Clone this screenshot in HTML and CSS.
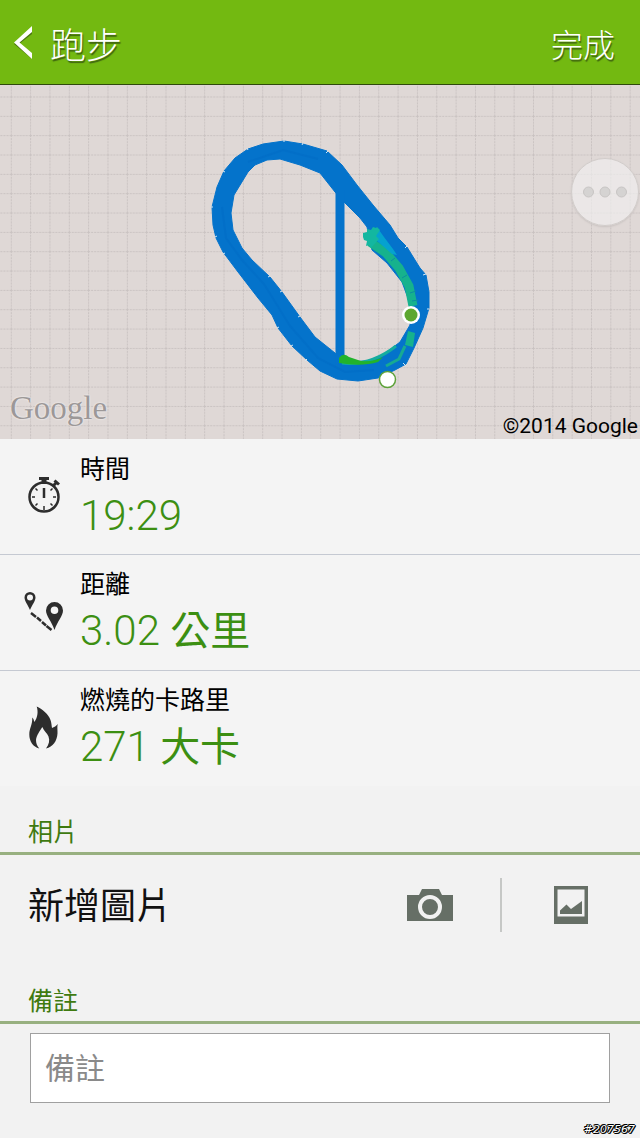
FILE: index.html
```html
<!DOCTYPE html>
<html lang="zh-Hant">

<head>
  <meta charset="UTF-8">
  <meta name="viewport" content="width=device-width, initial-scale=1.0">
  <title>跑步</title>
  <link rel="stylesheet" href="styles.css">
</head>

<body>
  <header class="topbar">
    <button class="back" type="button" aria-label="返回">
      <svg width="22" height="34" viewBox="0 0 22 34">
        <path d="M20 3v5L7 18l13 10v5L2 18z" fill="#3b5a10" opacity=".7"/>
        <path d="M20 0v6L7.500 16.500 20 27v6L2 16.500z" fill="#fff"/>
      </svg>
    </button>
    <h1>跑步</h1>
    <button class="done" type="button">完成</button>
  </header>

  <!-- Route map -->
  <section class="map">
    <svg class="map-canvas" viewBox="0 85 640 354" preserveAspectRatio="xMidYMid slice">
      <defs>
        <pattern id="grid" x="10.800" y="96.500" width="19.340" height="19.340" patternUnits="userSpaceOnUse">
          <path d="M.5 0V19.340M0 .5H19.340" stroke="#c9c2c1" stroke-width="1" stroke-dasharray="2 1" fill="none"/>
        </pattern>
      </defs>
      <rect y="85" width="640" height="354" fill="#dfd8d6"/>
      <rect y="85" width="640" height="354" fill="url(#grid)"/>

      <!-- running track -->
      <path fill="#0473cb" stroke="#0473cb" stroke-width="1" stroke-linejoin="round" fill-rule="evenodd" d="M212 207L217 187 224 171 235 158 248 149 263 144 284 141 303 144 327 151 342 165 357 185 373 205 390 225 398 238 407 247 415 260 420 268 426 275 429 292 429 308 423 328 414 348 406 364 395 370 378 378 358 381 337 379 320 371 307 360 292 346 278 328 272 315 258 298 238 272 223 252 216 238 213 225z
        M231 213L233 230 242 248 252 260 270 277 282 292 300 317 315 337 325 345 335 353 342 362 367 361 383 355 400 342 410 325 410 308 408 298 402 282 387 263 372 250 367 227 360 218 345 203 335 192 320 173 300 165 280 159 267 160 255 165 248 172 234 195z"/>
      <path d="M340 190V366" stroke="#0473cb" stroke-width="9"/>
      <path d="M222 207L226 238 242 260 264 284 290 326 318 358 345 372 374 370M248 162L283 150 318 159" stroke="#0068c4" stroke-width="2" fill="none" opacity=".4"/>
      <path d="M370 242L386 253 399 268 409 286 413 306" stroke="#16b28d" stroke-width="9" fill="none"/>
      <path d="M374 231l5-1 5 7 9 12 4 6-5-1-17-15z" fill="#05a2cf"/>
      <path d="M363 233l4-1 0-3 4 1 2-3 3 1 1-1 3 3-4 6 3 3-8 9-2-3-3 1 1-5-3-1-1-3z" fill="#13b7a0"/>
      <path d="M391 261l4-3M402 278l5-3M410 293l6-2M412 301l6-1" stroke="#0b8f9e" stroke-width="1"/>
      <path d="M342 363Q371 366 396 346" stroke="#15ad9f" stroke-width="3" fill="none"/>
      <path d="M339 363V358Q343 352 349 357L361 361Q374 362 383 357L378 362Q362 367 339 363z" fill="#22b32c"/>
      <path d="M386 366L399 359 405 346" stroke="#17aa92" stroke-width="3" fill="none"/>
      <path d="M408 331l7 2-2 14-8-2z" fill="#16b28d"/>
      <path d="M211 207h2M223 171l2 1M247 148l1 2M284 140v2M303 143l-1 2M328 151l-2 2M215 237l2-1M223 254l2-1M277 328l2-1M291 346l2-1M305 361l2-2M268 277l2-1M280 292l2-1M298 317l2-1M423 275l3-1M427 309h2M403 363l3 3M407 246l-2 2" stroke="#d5e8f3" stroke-width="1"/>

      <circle cx="411" cy="315" r="9" fill="#fff"/>
      <circle cx="411" cy="315" r="6.500" fill="#5da72f"/>
      <circle cx="387.500" cy="379.500" r="8" fill="#fff" stroke="#5da239" stroke-width="1.500"/>
    </svg>
    <button class="more" type="button" aria-label="更多">
      <svg width="46" height="12" viewBox="0 0 46 12" fill="#d5d3d2" stroke="#c8c5c4">
        <circle cx="6.500" cy="6" r="5"/>
        <circle cx="23" cy="6" r="5"/>
        <circle cx="39.500" cy="6" r="5"/>
      </svg>
    </button>
    <span class="map-logo">Google</span>
    <span class="map-copy">©2014 Google</span>
  </section>

  <!-- Workout results -->
  <section class="stats">
    <div class="stat">
      <svg class="stat-icon" viewBox="0 0 40 44" fill="none" stroke="#2d2d2d">
        <circle cx="20" cy="24" r="14.500" stroke-width="2.500"/>
        <path d="M15 5.500h10" stroke-width="3"/>
        <path d="M20 6v5" stroke-width="5"/>
        <path d="M29.500 12.500l3-3" stroke-width="3"/>
        <path d="M30.500 7.500l4.500 4" stroke-width="3"/>
        <path d="M20 15v10" stroke-width="2.500"/>
        <path d="M8 24h3M29 24h3M20 33v4M11.500 15.500l2 2M28.500 15.500l-2 2M11.500 32.500l2-2M28.500 32.500l-2-2" stroke-width="1.500"/>
      </svg>
      <div class="stat-text">
        <div class="stat-label">時間</div>
        <div class="stat-value">19:29</div>
      </div>
    </div>
    <div class="stat">
      <svg class="stat-icon" viewBox="0 0 40 44" fill="#2d2d2d">
        <path fill-rule="evenodd" d="M6 3a5.500 5.500 0 0 1 5.500 5.500C11.500 12 8 16 6 21 4 16 .5 12 .5 8.500A5.500 5.500 0 0 1 6 3zM6 5.500a3 3 0 1 0 0 6 3 3 0 0 0 0-6z"/>
        <path fill-rule="evenodd" d="M30.500 13a8.500 8.500 0 0 1 8.500 8.500C39 27 33.500 32 30.500 41 27.500 32 22 27 22 21.500a8.500 8.500 0 0 1 8.500-8.500zM30.500 17.500a3.800 3.800 0 1 0 0 7.600 3.800 3.800 0 0 0 0-7.600z"/>
        <path d="M7 24l5 4M13 28.500l4 3.500M18 33l4 3.500M22.500 37l5 4" stroke="#2d2d2d" stroke-width="2.500"/>
      </svg>
      <div class="stat-text">
        <div class="stat-label">距離</div>
        <div class="stat-value">3.02 <span class="unit">公里</span></div>
      </div>
    </div>
    <div class="stat">
      <svg class="stat-icon" viewBox="0 0 40 44" fill="#2d2d2d">
        <path d="M12.700 1.500C18 4 24.500 9 26.500 15c1 3 1 5 1.500 8 2-1 4.500-2 5.700-4-.7 3 0 6-.2 9.500C33 36 29 42 22 43.500c3-4 4-8 2.500-12C23 28 20 26 18.300 22 16 26 12.500 30 12 35c0 3 1 6 3.300 8.500C9 42 5.300 36 5.300 29.500 5.300 23 8.500 20 8.300 12.500c1.200 1 1.700 3 1.900 4.500 3.300-4 4.300-10 2.500-15.500z"/>
      </svg>
      <div class="stat-text">
        <div class="stat-label">燃燒的卡路里</div>
        <div class="stat-value">271 <span class="unit">大卡</span></div>
      </div>
    </div>
  </section>

  <!-- Photos -->
  <section>
    <h2>相片</h2>
    <div class="photo-row">
      <span class="photo-title">新增圖片</span>
      <button class="photo-button" type="button" aria-label="拍照">
        <svg width="46" height="34" viewBox="0 0 46 34">
          <path d="M0 7h12l3-6h17l3 6h11v26H0z" fill="#666f66"/>
          <circle cx="23" cy="19" r="10" fill="none" stroke="#f2f2f2" stroke-width="4"/>
        </svg>
      </button>
      <button class="photo-button" type="button" aria-label="圖庫">
        <svg width="34" height="38" viewBox="0 0 34 38">
          <path d="M0 0h34v38H0z" fill="#666f66"/>
          <path d="M3.500 3.500h27v27h-27z" fill="#f2f2f2"/>
          <path d="M6 28v-3.500l6.500-6L17 23l11-8v13z" fill="#666f66"/>
        </svg>
      </button>
    </div>
  </section>

  <!-- Notes -->
  <section>
    <h2><label for="note">備註</label></h2>
    <div class="note-row">
      <input type="text" id="note" placeholder="備註">
    </div>
  </section>

  <span class="stamp">#207567</span>
</body>

</html>
```
FILE: styles.css
```css
* {
  box-sizing: border-box;
}

body {
  font-family: Roboto, "Noto Sans CJK TC", sans-serif;
  background-color: #f2f2f2;
  color: #000;
  margin: 0;
  min-height: 100vh;
  position: relative;
}

button {
  background: none;
  border: none;
  padding: 0;
  font-family: inherit;
  color: inherit;
  cursor: pointer;
}

svg {
  display: block;
}

.topbar {
  display: flex;
  align-items: center;
  gap: 16px;
  height: 85px;
  padding: 2px 25px 0 12px;
  background-color: #73b911;
  border-bottom: 1px solid #2f4a0c;
  color: #fff;
  text-shadow: 1px 2px 1px #3f6410;
}

.topbar h1 {
  flex: 1;
  margin: 0;
  font-size: 36px;
  font-weight: 300;
}

.done {
  font-size: 32px;
  font-weight: 300;
  text-shadow: inherit;
}

.map {
  position: relative;
  height: 354px;
  overflow: hidden;
}

.map-canvas {
  width: 100%;
  height: 100%;
}

.more {
  position: absolute;
  top: 73px;
  right: 1px;
  width: 68px;
  height: 68px;
  display: flex;
  align-items: center;
  justify-content: center;
  border-radius: 50%;
  background-color: rgba(240, 238, 238, 0.7);
  border: 1px solid #d2cdcb;
  box-shadow: 0 1px 2px #c8c2c0;
}

.map-logo {
  position: absolute;
  left: 10px;
  bottom: 13px;
  font-family: "Liberation Serif", serif;
  font-size: 33px;
  line-height: 36px;
  color: #9c9898;
  text-shadow: 0 0 2px #fff;
}

.map-copy {
  position: absolute;
  right: 2px;
  bottom: 0;
  font-size: 21px;
  line-height: 26px;
}

.stats {
  background-color: #f4f4f4;
}

.stat {
  display: flex;
  align-items: center;
  gap: 16px;
  height: 116px;
  padding-left: 24px;
  border-bottom: 1px solid #c5c9d2;
}

.stat:last-child {
  height: 115px;
  border-bottom: none;
}

.stat-icon {
  width: 40px;
  height: 44px;
  margin-bottom: 4px;
}

.stat-text {
  padding-top: 2px;
}

.stat-label {
  font-size: 25px;
  line-height: 36px;
}

.stat-value {
  font-size: 42px;
  font-weight: 300;
  line-height: 56px;
  color: #3c8f12;
}

.unit {
  font-size: 40px;
  font-weight: 400;
}

h2 {
  margin: 0;
  padding: 28px 28px 0;
  font-size: 25px;
  font-weight: 400;
  line-height: 38px;
  color: #3f7a10;
  border-bottom: 3px solid #98b080;
}

.photo-row {
  display: flex;
  align-items: center;
  height: 100px;
  padding-left: 28px;
}

.photo-title {
  flex: 1;
  padding-bottom: 4px;
  font-size: 36px;
  color: #111;
}

.photo-button {
  display: flex;
  align-items: center;
  justify-content: center;
  width: 140px;
  height: 54px;
}

.photo-button + .photo-button {
  border-left: 2px solid #c6c8c6;
}

.note-row {
  padding: 9px 30px 0;
}

.note-row input {
  display: block;
  width: 100%;
  height: 70px;
  padding: 0 14px;
  font-family: inherit;
  font-size: 30px;
  background-color: #fff;
  border: 1px solid #a0a0a0;
  border-radius: 0;
}

.note-row input::placeholder {
  color: #8a8a8a;
}

.stamp {
  position: absolute;
  right: 5px;
  bottom: 1px;
  font-family: "DejaVu Sans", sans-serif;
  font-size: 11px;
  font-style: italic;
  line-height: 14px;
  color: #fff;
  text-shadow: 1px 0 #000, -1px 0 #000, 0 1px #000, 0 -1px #000, 1px 1px #000, -1px -1px #000;
}
```
